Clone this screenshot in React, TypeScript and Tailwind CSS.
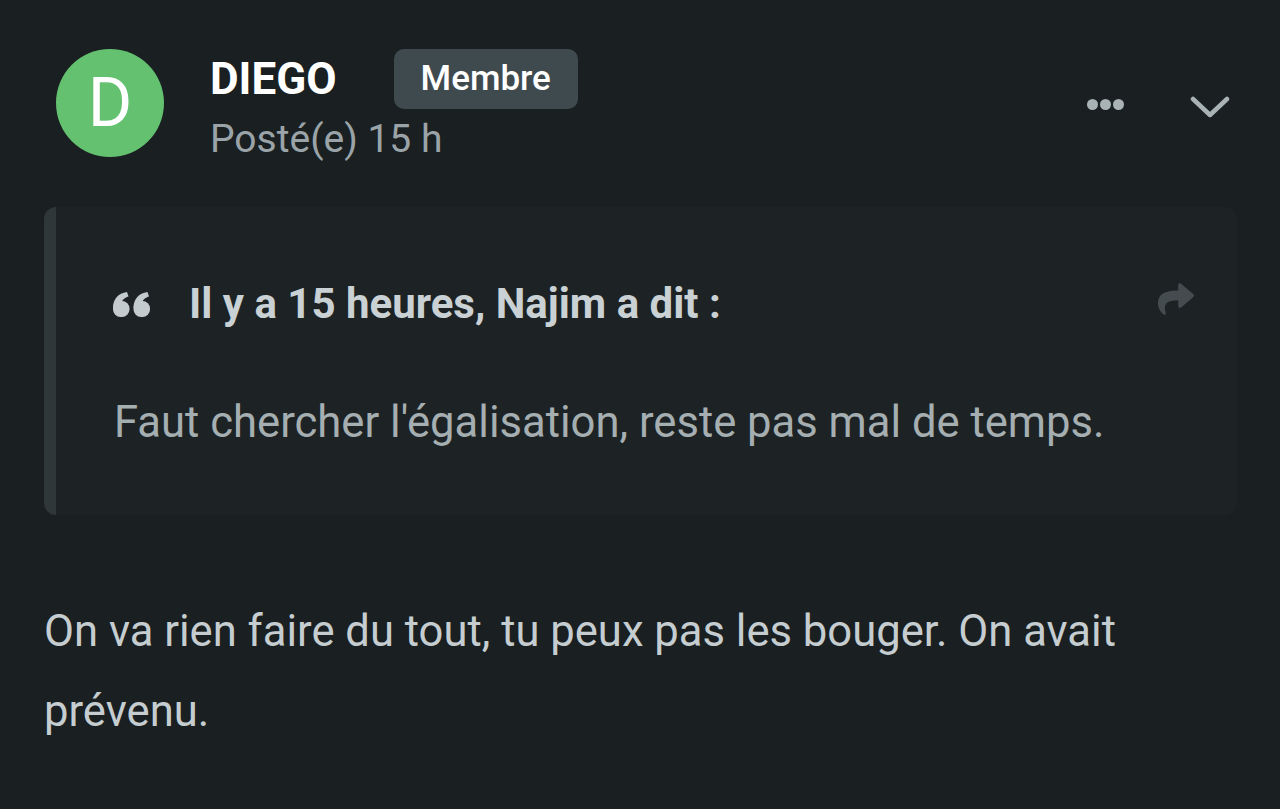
import React from "react";
import { FaShare } from "react-icons/fa";

function QuoteMark() {
  const glyph = (dx: number) =>
    `M${dx + 0},16 C${dx + 0},7 ${dx + 5},1.5 ${dx + 14},0 L${dx + 15.5},4.5 C${dx + 11},6 ${dx + 9},8.5 ${dx + 9},10 Z`;
  return (
    <svg width="37" height="25" viewBox="0 0 37 25" fill="#c3cbce">
      <path d={glyph(0)} />
      <rect x="0" y="9" width="16.5" height="16" rx="7.5" />
      <path d={glyph(20.5)} />
      <rect x="20.5" y="9" width="16.5" height="16" rx="7.5" />
    </svg>
  );
}

export default function App() {
  return (
    <div
      className="w-[1280px] h-[809px] overflow-hidden bg-[#1a1f21] text-[#c5cdd0]"
      style={{ fontFamily: "Roboto, 'Noto Sans', sans-serif" }}
    >
      {/* Header */}
      <div className="flex items-start pl-[56px] pt-[49px] pr-[50px]">
        <div className="w-[108px] h-[108px] rounded-full bg-[#63c16f] flex items-center justify-center text-white text-[68px] leading-none shrink-0">
          D
        </div>
        <div className="ml-[46px] flex flex-col">
          <div className="flex items-center h-[60px]">
            <span className="text-white font-bold text-[44px] leading-none">DIEGO</span>
            <span className="ml-[57px] h-[60px] px-[27px] rounded-[10px] bg-[#3f4a4f] text-white font-medium text-[35px] flex items-center">
              Membre
            </span>
          </div>
          <div className="text-[#9aa4a8] text-[39px] leading-none mt-[11px]">Posté(e) 15 h</div>
        </div>
        <div className="ml-auto flex items-start gap-[66px]">
          <div className="flex gap-[2px] mt-[50px]">
            <span className="w-[11px] h-[11px] rounded-full bg-[#a9b2b5]" />
            <span className="w-[11px] h-[11px] rounded-full bg-[#a9b2b5]" />
            <span className="w-[11px] h-[11px] rounded-full bg-[#a9b2b5]" />
          </div>
          <svg width="40" height="24" viewBox="0 0 40 24" fill="none" className="mt-[46px]">
            <path d="M3 4 L20 20 L37 4" stroke="#a9b2b5" strokeWidth="4.5" strokeLinecap="round" strokeLinejoin="round" />
          </svg>
        </div>
      </div>

      {/* Quote */}
      <div className="mt-[48px] ml-[44px] mr-[43px] h-[308px] rounded-[12px] bg-[#1d2325] border-l-[12px] border-[#2f3739] flex flex-col">
        <div className="flex items-center pl-[57px] pr-[40px] pt-[76px]">
          <QuoteMark />
          <span className="ml-[39px] text-[#c9d1d4] font-bold text-[42px] leading-none">
            Il y a 15 heures, Najim a dit :
          </span>
          <FaShare className="ml-auto text-[#454c4f] w-[42px] h-[36px] -mt-[10px]" />
        </div>
        <div className="pl-[58px] mt-[76px] text-[43.6px] leading-none text-[#a5aeb1]">
          Faut chercher l'égalisation, reste pas mal de temps.
        </div>
      </div>

      {/* Body */}
      <div className="mt-[77px] ml-[44px] w-[1110px] text-[43.6px] leading-[80px] text-[#c5cdd0]">
        On va rien faire du tout, tu peux pas les bouger. On avait prévenu.
      </div>
    </div>
  );
}
